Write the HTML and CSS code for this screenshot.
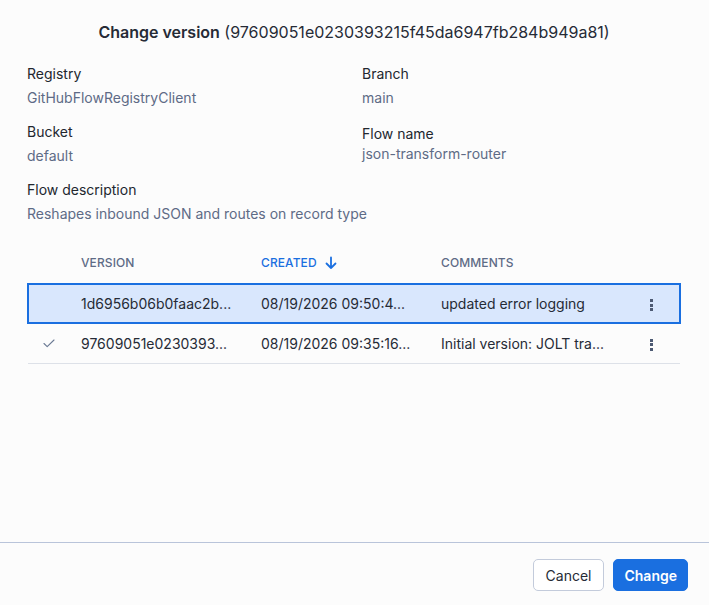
FILE: index.html
```html
<!DOCTYPE html>
<html lang="en">
  <head>
    <meta charset="UTF-8" />
    <meta name="viewport" content="width=device-width, initial-scale=1.0" />
    <title>Change version</title>
    <link rel="stylesheet" href="styles.css">
  </head>
  <body>
    <div class="dialog">
      <div class="dialog-body">
        <h1 class="dialog-title">
          <strong>Change version</strong> (97609051e0230393215f45da6947fb284b949a81)
        </h1>

        <div class="details">
          <div class="field">
            <div class="field-label">Registry</div>
            <div class="field-value">GitHubFlowRegistryClient</div>
          </div>
          <div class="field">
            <div class="field-label">Branch</div>
            <div class="field-value">main</div>
          </div>
          <div class="field">
            <div class="field-label">Bucket</div>
            <div class="field-value">default</div>
          </div>
          <div class="field field-tight">
            <div class="field-label">Flow name</div>
            <div class="field-value">json-transform-router</div>
          </div>
          <div class="field field-wide">
            <div class="field-label">Flow description</div>
            <div class="field-value">Reshapes inbound JSON and routes on record type</div>
          </div>
        </div>

        <table class="versions">
          <thead>
            <tr>
              <th class="col-current"></th>
              <th class="col-version">Version</th>
              <th class="col-created sorted">
                Created
                <svg class="sort-icon" width="14" height="14" viewBox="0 0 14 14">
                  <path d="M7 1.5v10.5M2.5 7.5L7 12l4.5-4.5" fill="none" stroke="currentColor" stroke-width="1.8" stroke-linecap="round" stroke-linejoin="round"/>
                </svg>
              </th>
              <th class="col-comments">Comments</th>
              <th class="col-actions"></th>
            </tr>
          </thead>
          <tbody>
            <tr class="selected">
              <td class="col-current"></td>
              <td class="col-version">1d6956b06b0faac2b...</td>
              <td class="col-created">08/19/2026 09:50:4...</td>
              <td class="col-comments">updated error logging</td>
              <td class="col-actions"><span class="kebab"><i></i><i></i><i></i></span></td>
            </tr>
            <tr>
              <td class="col-current">
                <svg width="14" height="14" viewBox="0 0 14 14">
                  <path d="M2 7.5l3.2 3.2L12 4" fill="none" stroke="#6b7a94" stroke-width="1.1" stroke-linecap="round" stroke-linejoin="round"/>
                </svg>
              </td>
              <td class="col-version">97609051e0230393...</td>
              <td class="col-created">08/19/2026 09:35:16...</td>
              <td class="col-comments">Initial version: JOLT tra...</td>
              <td class="col-actions"><span class="kebab"><i></i><i></i><i></i></span></td>
            </tr>
          </tbody>
        </table>
      </div>

      <div class="dialog-actions">
        <button class="btn btn-secondary">Cancel</button>
        <button class="btn btn-primary">Change</button>
      </div>
    </div>
  </body>
</html>
```

FILE: styles.css
```css
* {
  box-sizing: border-box;
}

html,
body {
  height: 100%;
}

body {
  margin: 0;
  font-family: "Inter", "Noto Sans", sans-serif;
  font-size: 14px;
  color: #1f2533;
  background-color: #fcfcfc;
}

.dialog {
  height: 100%;
  display: flex;
  flex-direction: column;
}

.dialog-body {
  flex: 1;
  padding: 22px 28px 0 27px;
}

.dialog-title {
  margin: 0 0 22px;
  font-size: 16px;
  font-weight: 400;
  text-align: center;
  line-height: 20px;
  color: #262b36;
}

.dialog-title strong {
  font-weight: 600;
}

.details {
  display: grid;
  grid-template-columns: 335px 1fr;
  row-gap: 14px;
}

.field-label {
  line-height: 20px;
  color: #22272f;
}

.field-value {
  margin-top: 4px;
  line-height: 20px;
  color: #5e6b86;
}

.field-tight {
  padding-top: 2px;
}

.field-tight .field-value {
  margin-top: 0;
}

.field-wide {
  grid-column: 1 / -1;
}

.versions {
  width: 654px;
  margin-top: 14px;
  border-collapse: collapse;
  table-layout: fixed;
}

.versions th {
  height: 46px;
  padding: 4px 0 0;
  text-align: left;
  font-size: 12px;
  font-weight: 500;
  letter-spacing: 0.1px;
  text-transform: uppercase;
  color: #5e6b86;
}

.versions th.sorted {
  color: #1a6fe0;
}

.sort-icon {
  vertical-align: -3px;
  margin-left: 4px;
}

.versions td {
  height: 40px;
  padding: 0;
  border-bottom: 1px solid #dde1e8;
  white-space: nowrap;
  color: #262b36;
}

.versions tbody tr.selected td {
  height: 39px;
  background-color: #d9e7fd;
  border-top: 2px solid #1a6fe0;
  border-bottom: 2px solid #1a6fe0;
}

.versions tbody tr.selected td:first-child {
  border-left: 2px solid #1a6fe0;
}

.versions tbody tr.selected td:last-child {
  border-right: 2px solid #1a6fe0;
}

.col-current {
  width: 53px;
  padding-left: 14px !important;
}

.col-current svg {
  display: block;
}

.col-version,
.col-created {
  width: 180px;
}

.col-comments {
  width: 188px;
}

.col-actions {
  text-align: center;
}

.kebab {
  display: inline-flex;
  flex-direction: column;
  gap: 1.5px;
  vertical-align: middle;
  margin-left: -6px;
}

.kebab i {
  display: block;
  width: 3px;
  height: 3px;
  background-color: #4d5a73;
}

.dialog-actions {
  display: flex;
  justify-content: flex-end;
  gap: 9px;
  padding: 16px 21px 14px;
  border-top: 1px solid #b9c4da;
}

.btn {
  height: 32px;
  padding: 0 12px;
  border-radius: 5px;
  font-family: inherit;
  font-size: 14px;
  cursor: pointer;
}

.btn-secondary {
  background-color: #fff;
  border: 1px solid #c3cbdb;
  color: #262b36;
}

.btn-primary {
  padding: 0 10px;
  background-color: #1a6fe0;
  border: 1px solid #1a6fe0;
  color: #fff;
  font-weight: 600;
}
```
